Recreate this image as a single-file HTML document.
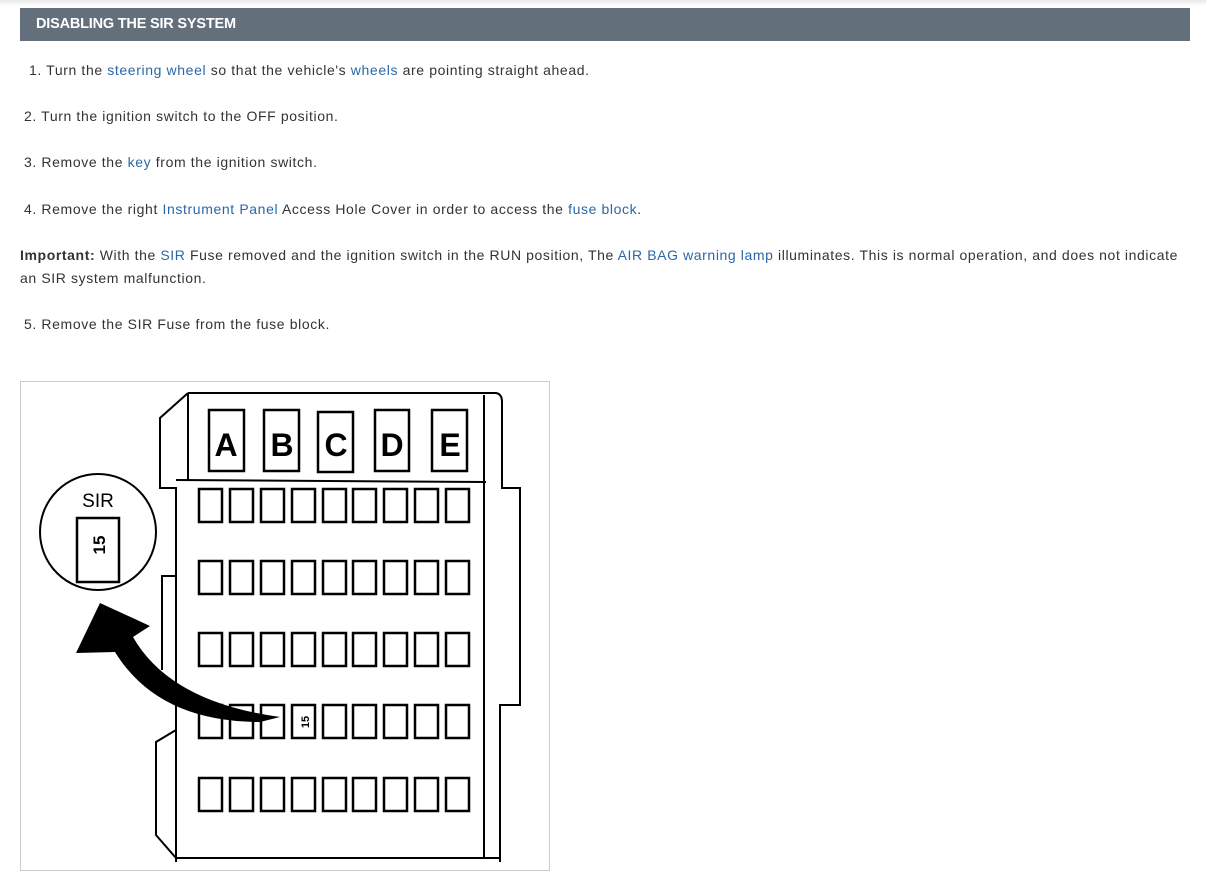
<!DOCTYPE html>
<html><head><style>
body{margin:0;width:1206px;height:865px;overflow:hidden;background:#fff;font-family:"Liberation Sans",sans-serif;font-size:14px;color:#333;position:relative}
.hdr{position:absolute;left:20px;top:8px;width:1170px;height:33px;background:#646f7c;color:#fff;font-weight:bold;font-size:14.5px;line-height:33px;padding-left:16px;box-sizing:border-box;letter-spacing:-0.2px}
.top{position:absolute;left:0;top:0;width:1206px;height:6px;background:linear-gradient(#e8e8e8,#fff)}
.l{position:absolute;left:24px;white-space:nowrap;line-height:20px;letter-spacing:0.62px}
a{color:#2b67a8;text-decoration:none}
.fig{position:absolute;left:20px;top:381px;width:530px;height:490px;border:1px solid #ccc;box-sizing:border-box}
</style></head><body>
<div class="top"></div>
<div class="hdr">DISABLING THE SIR SYSTEM</div>
<div class="l" style="top:60px;left:29px">1. Turn the <a>steering wheel</a> so that the vehicle's <a>wheels</a> are pointing straight ahead.</div>
<div class="l" style="top:106px">2. Turn the ignition switch to the OFF position.</div>
<div class="l" style="top:152px">3. Remove the <a>key</a> from the ignition switch.</div>
<div class="l" style="top:199px">4. Remove the right <a>Instrument Panel</a> Access Hole Cover in order to access the <a>fuse block</a>.</div>
<div class="l" style="top:245px;left:20px;letter-spacing:0.6px"><b>Important:</b> With the <a>SIR</a> Fuse removed and the ignition switch in the RUN position, The <a>AIR BAG warning lamp</a> illuminates. This is normal operation, and does not indicate</div>
<div class="l" style="top:268px;left:20px">an SIR system malfunction.</div>
<div class="l" style="top:314px">5. Remove the SIR Fuse from the fuse block.</div>
<div class="fig"></div>
<svg style="position:absolute;left:0;top:0" width="1206" height="865" viewBox="0 0 1206 865">
<g fill="none" stroke="#000" stroke-width="2">
<path d="M188,393 L496,393 Q502,394 502,402 L502,488 L520,488 L520,705 L500,705 L500,862"/>
<path d="M188,393 L160,418 L160,488 L176,488 L176,862"/>
<line x1="188" y1="393" x2="188" y2="480"/>
<line x1="484" y1="395" x2="484" y2="858"/>
<line x1="176" y1="480" x2="486" y2="482"/>
<path d="M176,576 L162,576 L162,670"/>
<path d="M176,730 L156,742 L156,835 L176,858 L500,858"/>
<g stroke-width="2.5">
<rect x="209" y="410" width="35" height="61"/><rect x="264" y="410" width="35" height="61"/><rect x="318" y="412" width="35" height="60"/><rect x="375" y="410" width="34" height="61"/><rect x="432" y="410" width="35" height="61"/>
</g>
<g id="r" stroke-width="2.5">
<rect x="199" y="489" width="23" height="33"/><rect x="230" y="489" width="23" height="33"/><rect x="261" y="489" width="23" height="33"/><rect x="292" y="489" width="23" height="33"/><rect x="323" y="489" width="23" height="33"/><rect x="353" y="489" width="23" height="33"/><rect x="384" y="489" width="23" height="33"/><rect x="415" y="489" width="23" height="33"/><rect x="446" y="489" width="23" height="33"/>
</g>
<use href="#r" y="72"/><use href="#r" y="144"/><use href="#r" y="216"/><use href="#r" y="289"/>
<circle cx="98" cy="532" r="58"/>
<rect x="77" y="518" width="42" height="64" stroke-width="2.5"/>
</g>
<path d="M76,653 L100,603 L150,626 L133,637 Q170,702 280,717 L260,722 Q158,722 115,652 Z" fill="#000"/>
<g font-family="Liberation Sans,sans-serif" font-size="32" font-weight="bold" text-anchor="middle" fill="#000">
<text x="226" y="456">A</text><text x="282" y="456">B</text><text x="336" y="456">C</text><text x="392" y="456">D</text><text x="450" y="456">E</text>
</g>
<text x="98" y="507" font-family="Liberation Sans,sans-serif" font-size="19" text-anchor="middle">SIR</text>
<text transform="translate(105,545) rotate(-90)" font-family="Liberation Sans,sans-serif" font-size="17" font-weight="bold" text-anchor="middle">15</text>
<text transform="translate(309,722) rotate(-90)" font-family="Liberation Sans,sans-serif" font-size="11" font-weight="bold" text-anchor="middle">15</text>
</svg>
</body></html>
